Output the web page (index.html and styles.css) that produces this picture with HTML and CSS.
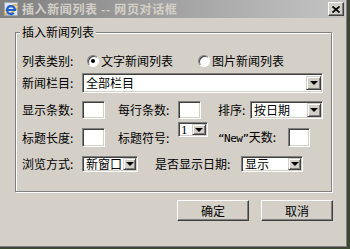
FILE: index.html
```html
<!DOCTYPE html>
<html lang="zh-CN">
<head>
    <meta charset="UTF-8">
    <title>插入新闻列表 -- 网页对话框</title>
    <link rel="stylesheet" href="styles.css">
</head>
<body>

<div class="window">
    <div class="titlebar">
        <svg class="ie-icon" width="16" height="16" viewBox="0 0 16 16">
            <rect x="1.5" y="1.5" width="13" height="13" fill="#dfe6ee" stroke="#9aa8b8" stroke-width="1"/>
            <ellipse cx="8" cy="8.5" rx="7.4" ry="2.8" transform="rotate(-30 8 8.5)" fill="none" stroke="#e0a838" stroke-width="1.2"/>
            <path d="M4 9h8a4 4 0 1 0 -1.2 2.9" fill="none" stroke="#1d5fd2" stroke-width="2.2"/>
        </svg>
        <span class="title">插入新闻列表 -- 网页对话框</span>
        <span class="close">
            <svg width="8" height="7" viewBox="0 0 8 7">
                <path d="M0.5 0.5L7.5 6.5M7.5 0.5L0.5 6.5" stroke="#000" stroke-width="1.7"/>
            </svg>
        </span>
    </div>

    <div class="client">
        <div class="group">
            <div class="legend">插入新闻列表</div>

            <div class="row r1">
                <span class="lbl wide">列表类别:</span>
                <span class="radio on"></span>
                <span class="opt">文字新闻列表</span>
                <span class="radio second"></span>
                <span class="opt">图片新闻列表</span>
            </div>

            <div class="row r2">
                <span class="lbl">新闻栏目:</span>
                <div class="combo big">
                    <span class="val">全部栏目</span>
                    <span class="drop"></span>
                </div>
            </div>

            <div class="row r3">
                <span class="lbl">显示条数:</span>
                <span class="box"></span>
                <span class="lbl mid">每行条数:</span>
                <span class="box"></span>
                <span class="lbl sort">排序:</span>
                <div class="combo sort-combo">
                    <span class="val">按日期</span>
                    <span class="drop"></span>
                </div>
            </div>

            <div class="row r4">
                <span class="lbl">标题长度:</span>
                <span class="box tall"></span>
                <span class="lbl mid">标题符号:</span>
                <div class="combo tiny">
                    <span class="val num">1</span>
                    <span class="drop"></span>
                </div>
                <span class="lbl days"><span class="en">“New”</span>天数:</span>
                <span class="box tall narrow"></span>
            </div>

            <div class="row r5">
                <span class="lbl">浏览方式:</span>
                <div class="combo small open-combo">
                    <span class="val">新窗口</span>
                    <span class="drop"></span>
                </div>
                <span class="lbl date">是否显示日期:</span>
                <div class="combo small date-combo">
                    <span class="val">显示</span>
                    <span class="drop"></span>
                </div>
            </div>
        </div>

        <div class="buttons">
            <button class="btn">确定</button>
            <button class="btn">取消</button>
        </div>
    </div>
</div>

</body>
</html>
```

FILE: styles.css
```css
body {
    margin: 0;
    background: #3b4a2e;
    font-family: "Noto Sans CJK SC", "Noto Sans", sans-serif;
    font-size: 12px;
    color: #000;
}

.window {
    width: 348px;
    height: 248px;
    box-sizing: border-box;
    background: #d4d0c8;
    border-right: 1px solid #404040;
    border-bottom: 1px solid #404040;
    box-shadow: inset -1px -1px 0 #808080;
    display: flex;
    flex-direction: column;
}

/* barra de titulo (ventana inactiva) */
.titlebar {
    width: 345px;
    height: 18px;
    flex: none;
    box-sizing: border-box;
    padding-left: 3px;
    background: linear-gradient(to right, #808080, #c4c4c4);
    display: flex;
    align-items: center;
}

.ie-icon {
    display: block;
    flex: none;
}

.title {
    margin-left: 3px;
    font-weight: bold;
    color: #d4d0c8;
    line-height: 18px;
    letter-spacing: 0.6px;
    white-space: nowrap;
}

.close {
    margin-left: auto;
    margin-right: 1px;
    width: 16px;
    height: 14px;
    box-sizing: border-box;
    background: #d4d0c8;
    border: 1px solid;
    border-color: #fff #404040 #404040 #fff;
    box-shadow: inset -1px -1px 0 #808080;
    display: flex;
    align-items: center;
    justify-content: center;
}

.close svg {
    display: block;
}

.client {
    padding: 14px 0 0 15px;
}

/* cuadro de grupo */
.group {
    position: relative;
    width: 317px;
    height: 160px;
    box-sizing: border-box;
    border: 1px solid #808080;
    box-shadow: 1px 1px 0 #fff, inset 1px 1px 0 #fff;
    padding: 19px 0 0 6px;
}

.legend {
    position: absolute;
    left: 4px;
    top: -9px;
    padding: 0 2px;
    background: #d4d0c8;
    line-height: 16px;
}

.row {
    display: flex;
    align-items: center;
    line-height: 16px;
    white-space: nowrap;
}

.r1 { height: 18px; margin-bottom: 3px; }
.r2 { height: 20px; margin-bottom: 8px; }
.r3 { height: 18px; margin-bottom: 9px; }
.r4 { height: 19px; margin-bottom: 8px; }
.r5 { height: 17px; }

.lbl {
    width: 60px;
    flex: none;
}

.lbl.wide { width: 65px; }
.lbl.mid { width: 60px; margin-left: 13px; }
.lbl.sort { width: 32px; margin-left: 17px; }
.lbl.days { width: 70px; margin-left: 10px; }
.lbl.date { width: 86px; margin-left: 17px; }

.en {
    font-family: "DejaVu Sans Mono", monospace;
    font-size: 11px;
    letter-spacing: -0.5px;
}

/* botones de radio */
.radio {
    width: 12px;
    height: 12px;
    flex: none;
    box-sizing: border-box;
    border-radius: 50%;
    border: 1px solid;
    border-color: #808080 #fff #fff #808080;
    background: #fff;
    box-shadow: inset 1px 1px 0 #404040;
    display: flex;
    align-items: center;
    justify-content: center;
    margin-right: 2px;
}

.radio.on::after {
    content: "";
    width: 4px;
    height: 4px;
    border-radius: 50%;
    background: #000;
}

.radio.second {
    margin-left: 25px;
}

.opt {
    width: 72px;
}

/* cajas de texto hundidas */
.box {
    width: 23px;
    height: 18px;
    flex: none;
    box-sizing: border-box;
    background: #fff;
    border: 1px solid;
    border-color: #808080 #fff #fff #808080;
    box-shadow: inset 1px 1px 0 #404040, inset -1px -1px 0 #d4d0c8;
}

.box.tall { height: 19px; }
.box.narrow { width: 22px; }

/* listas desplegables */
.combo {
    display: flex;
    flex: none;
    box-sizing: border-box;
    padding: 1px;
    background: #fff;
    border: 1px solid;
    border-color: #808080 #fff #fff #808080;
    box-shadow: inset 1px 1px 0 #404040, inset -1px -1px 0 #d4d0c8;
}

.combo .val {
    flex: 1;
    padding-left: 2px;
    display: flex;
    align-items: center;
}

.combo .val.num {
    font-family: "Liberation Serif", serif;
    font-size: 13px;
}

.combo .drop {
    width: 14px;
    flex: none;
    box-sizing: border-box;
    background: #d4d0c8;
    border: 1px solid;
    border-color: #d4d0c8 #404040 #404040 #d4d0c8;
    box-shadow: inset 1px 1px 0 #fff, inset -1px -1px 0 #808080;
    display: flex;
    align-items: center;
    justify-content: center;
}

.combo .drop::after {
    content: "";
    width: 0;
    height: 0;
    border-left: 4px solid transparent;
    border-right: 4px solid transparent;
    border-top: 4px solid #000;
}

.combo.big { width: 241px; height: 20px; }
.combo.big .drop { width: 15px; margin: 1px 0; }
.sort-combo { width: 73px; height: 18px; }
.combo.tiny { width: 30px; height: 15px; margin-bottom: 16px; }
.combo.tiny .val { padding-left: 1px; }
.combo.small { height: 16px; }
.combo.small .drop { width: 13px; }
.open-combo { width: 56px; }
.date-combo { width: 62px; }

/* botones de accion */
.buttons {
    display: flex;
    justify-content: flex-end;
    gap: 12px;
    width: 318px;
    margin-top: 8px;
}

.btn {
    width: 72px;
    height: 21px;
    padding: 0;
    font: inherit;
    color: #000;
    background: #d4d0c8;
    border: 1px solid;
    border-color: #fff #404040 #404040 #fff;
    box-shadow: inset -1px -1px 0 #808080;
    line-height: 17px;
}
```
